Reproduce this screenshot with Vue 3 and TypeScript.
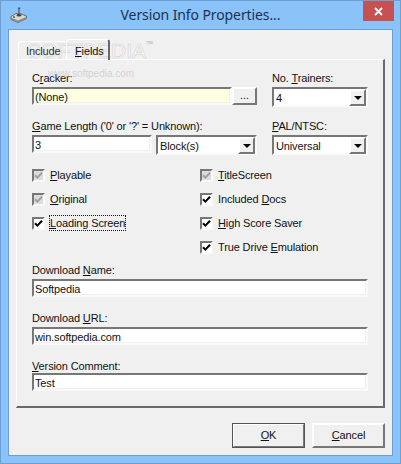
<script setup lang="ts">
interface Check { label: string; pre: string; key: string; post: string; state: 'off' | 'on'; focus?: boolean }
const leftChecks: Check[] = [
  { label: 'Playable', pre: '', key: 'P', post: 'layable', state: 'off' },
  { label: 'Original', pre: '', key: 'O', post: 'riginal', state: 'off' },
  { label: 'Loading', pre: '', key: 'L', post: 'oading Screen', state: 'on', focus: true },
]
const rightChecks: Check[] = [
  { label: 'Title', pre: '', key: 'T', post: 'itleScreen', state: 'off' },
  { label: 'Docs', pre: 'Included ', key: 'D', post: 'ocs', state: 'on' },
  { label: 'High', pre: '', key: 'H', post: 'igh Score Saver', state: 'on' },
  { label: 'Drive', pre: 'True Drive ', key: 'E', post: 'mulation', state: 'on' },
]
const columns = [leftChecks, rightChecks]
const fields = [
  { pre: 'Download ', key: 'N', post: 'ame:', value: 'Softpedia', cls: 'f-name' },
  { pre: 'Download ', key: 'U', post: 'RL:', value: 'win.softpedia.com', cls: 'f-url' },
  { pre: '', key: 'V', post: 'ersion Comment:', value: 'Test', cls: 'f-comment' },
]
</script>

<template>
  <div class="window">
    <header class="titlebar">
      <svg class="appicon" viewBox="0 0 18 16" width="18" height="16">
        <path d="M8 0.5h2.2v1.6H9.6v6H8.4v-6H8z" fill="#555" />
        <path d="M1 9.5 L6 6.5 L10 6.5 L16.5 9 L16.5 11.5 L8 15.5 L1 12.5 Z" fill="#d8d8d4" stroke="#55554f" stroke-width="0.8" />
        <path d="M1 10.5 L8 13.5 L16.5 9.8 L16.5 11.5 L8 15.5 L1 12.5 Z" fill="#8d8d86" />
        <ellipse cx="9" cy="8.3" rx="2.6" ry="1.2" fill="#45453f" />
        <circle cx="4" cy="10" r="0.9" fill="#55554f" />
      </svg>
      <h1 class="title">Version Info Properties...</h1>
      <div class="closecell">
        <div class="close">
          <svg viewBox="0 0 9 9" width="9" height="9"><path d="M1 1 L8 8 M8 1 L1 8" stroke="#fff" stroke-width="1.8" /></svg>
        </div>
      </div>
    </header>

    <main class="client">
      <div class="wm wm-big">SOFTPEDIA<sup>™</sup></div>
      <nav class="tabs">
        <div class="tab">Include</div>
        <div class="tab active"><u>F</u>ields</div>
      </nav>

      <section class="panel">
        <div class="row row-one">
          <div class="col-main">
            <label class="lbl">C<u>r</u>acker:</label>
            <div class="inline">
              <div class="edit cracker">(None)</div>
              <div class="browse">...</div>
            </div>
          </div>
          <div class="col-side">
            <label class="lbl">No. <u>T</u>rainers:</label>
            <div class="combo"><span class="combo-text">4</span><span class="arrow"><i /></span></div>
          </div>
        </div>

        <div class="row row-two">
          <div class="col-main">
            <label class="lbl"><u>G</u>ame Length ('0' or '?' = Unknown):</label>
            <div class="inline spaced">
              <div class="edit length">3</div>
              <div class="combo units"><span class="combo-text">Block(s)</span><span class="arrow"><i /></span></div>
            </div>
          </div>
          <div class="col-side">
            <label class="lbl"><u>P</u>AL/NTSC:</label>
            <div class="combo"><span class="combo-text">Universal</span><span class="arrow"><i /></span></div>
          </div>
        </div>

        <div class="checks">
          <div v-for="(col, i) in columns" :key="i" class="check-col">
            <div v-for="c in col" :key="c.label" class="check">
              <span class="box" :class="c.state">
                <svg viewBox="0 0 9 9" width="9" height="9"><path d="M1 4.2 L3.4 6.6 L8 1.8" fill="none" stroke-width="2" /></svg>
              </span>
              <span class="check-text" :class="{ focus: c.focus }">{{ c.pre }}<u>{{ c.key }}</u>{{ c.post }}</span>
            </div>
          </div>
        </div>

        <div v-for="f in fields" :key="f.cls" class="field" :class="f.cls">
          <label class="lbl">{{ f.pre }}<u>{{ f.key }}</u>{{ f.post }}</label>
          <div class="edit wide">{{ f.value }}</div>
        </div>
      </section>

      <footer class="actions">
        <div class="btn default"><u>O</u>K</div>
        <div class="btn"><u>C</u>ancel</div>
      </footer>

      <div class="wm wm-small">www.softpedia.com</div>
    </main>
  </div>
</template>

<style>
html, body { margin: 0; padding: 0; background: #8ac2fa; }
</style>

<style scoped>
.window {
  box-sizing: border-box;
  width: 401px;
  height: 464px;
  background: #8ac2fa;
  border: 1px solid #6f9fd0;
  display: flex;
  flex-direction: column;
  font: 11px/14px "Liberation Sans", Arial, sans-serif;
  letter-spacing: -0.13px;
  color: #111;
}
.titlebar {
  height: 28px;
  display: grid;
  grid-template-columns: 1fr auto 1fr;
  align-items: start;
}
.appicon { margin: 6px 0 0 9px; }
.title {
  margin: 4px 0 0;
  font: 400 14px/20px "Noto Sans", "Open Sans", sans-serif;
  letter-spacing: -0.1px;
  color: #1a3350;
}
.closecell { display: flex; justify-content: flex-end; padding-right: 6px; }
.close {
  width: 31px;
  height: 20px;
  background: #c75050;
  display: flex;
  align-items: center;
  justify-content: center;
}
.client {
  position: relative;
  margin: 0 7px 7px;
  flex: 1;
  background: #f0f0f0;
  border: 1px solid #6f9fd0;
  padding: 0 7px;
  display: flex;
  flex-direction: column;
}
.tabs {
  height: 29px;
  padding-left: 2px;
  display: flex;
  align-items: flex-end;
  position: relative;
  z-index: 1;
}
.tab {
  box-sizing: border-box;
  height: 18px;
  width: 48px;
  padding: 2px 0 0 7px;
  border: 1px solid #fff;
  border-width: 1px 0 0 1px;
  border-radius: 3px 3px 0 0;
  color: #333;
}
.tab.active {
  height: 21px;
  width: 44px;
  padding: 4px 0 0 8px;
  margin-bottom: -1px;
  border-right: 2px solid #696969;
  color: #111;
}
.panel {
  box-sizing: border-box;
  height: 349px;
  padding: 11px 15px 0 15px;
  border: 1px solid #fff;
  border-right: 2px solid #696969;
  border-bottom: 2px solid #696969;
  display: flex;
  flex-direction: column;
}
.row { display: flex; justify-content: space-between; }
.row-two { margin-top: 12px; }
.col-main { width: 225px; }
.col-side { width: 96px; }
.lbl { display: block; height: 14px; margin-bottom: 2px; white-space: nowrap; }
.inline { display: flex; }
.spaced { justify-content: space-between; }
.edit {
  box-sizing: border-box;
  height: 18px;
  padding: 1px 0 0 1px;
  background: #fff;
  border: 2px solid;
  border-color: #777 #fafafa #fafafa #777;
  box-shadow: inset -1px -1px #f0f0f0;
  line-height: 14px;
  overflow: hidden;
}
.cracker { width: 200px; background: #ffffe1; }
.length { width: 120px; }
.wide { width: 100%; }
.browse {
  box-sizing: border-box;
  width: 25px;
  height: 18px;
  background: #f0f0f0;
  border: 2px solid;
  border-color: #fff #777 #777 #fff;
  text-align: center;
  line-height: 12px;
}
.combo {
  box-sizing: border-box;
  height: 20px;
  display: flex;
  align-items: stretch;
  background: #fff;
  border: 2px solid;
  border-color: #777 #fafafa #fafafa #777;
}
.units { width: 101px; }
.combo-text { flex: 1; padding: 2px 0 0 2px; }
.arrow {
  box-sizing: border-box;
  width: 17px;
  height: 17px;
  background: #f0f0f0;
  border: 2px solid;
  border-color: #fff #777 #777 #fff;
  display: flex;
  align-items: center;
  justify-content: center;
}
.arrow i {
  width: 0;
  height: 0;
  border: 4px solid transparent;
  border-top: 4px solid #000;
  border-bottom: 0;
}
.checks {
  display: grid;
  grid-template-columns: 168px 1fr;
  margin-top: 8px;
}
.check { height: 24px; display: flex; align-items: center; }
.box {
  box-sizing: border-box;
  width: 13px;
  height: 13px;
  border: 2px solid;
  border-color: #777 #fafafa #fafafa #777;
  display: flex;
  align-items: center;
  justify-content: center;
}
.box.on { background: #fff; }
.box.on path { stroke: #000; }
.box.off { background: #dcdcdc; }
.box.off path { stroke: #a0a0a0; }
.check-text { margin-left: 4px; border: 1px dotted transparent; }
.check-text.focus { border-color: #111; }
.f-name { margin-top: 4px; }
.f-url { margin-top: 14px; }
.f-comment { margin-top: 14px; }
.f-comment .lbl { margin-bottom: 0; }
.actions {
  display: flex;
  justify-content: flex-end;
  gap: 7px;
  margin-top: 15px;
}
.btn {
  box-sizing: border-box;
  width: 73px;
  height: 25px;
  background: #f0f0f0;
  border: 2px solid;
  border-color: #fff #777 #777 #fff;
  text-align: center;
  line-height: 21px;
}
.btn.default { outline: 1px solid #555; outline-offset: -1px; }
.wm {
  position: absolute;
  pointer-events: none;
  white-space: nowrap;
}
.wm-big {
  left: 18px;
  top: 9px;
  font: 400 21px/24px "Liberation Sans", sans-serif;
  letter-spacing: 0;
  color: #f7f7f7;
  -webkit-text-stroke: 0.5px #cfcfcf;
}
.wm-big sup { font-size: 7px; vertical-align: 12px; line-height: 0; }
.wm-small {
  left: 39px;
  top: 37px;
  font: 10px/14px "Liberation Sans", sans-serif;
  letter-spacing: 0;
  color: rgba(190, 190, 190, 0.6);
}
</style>
